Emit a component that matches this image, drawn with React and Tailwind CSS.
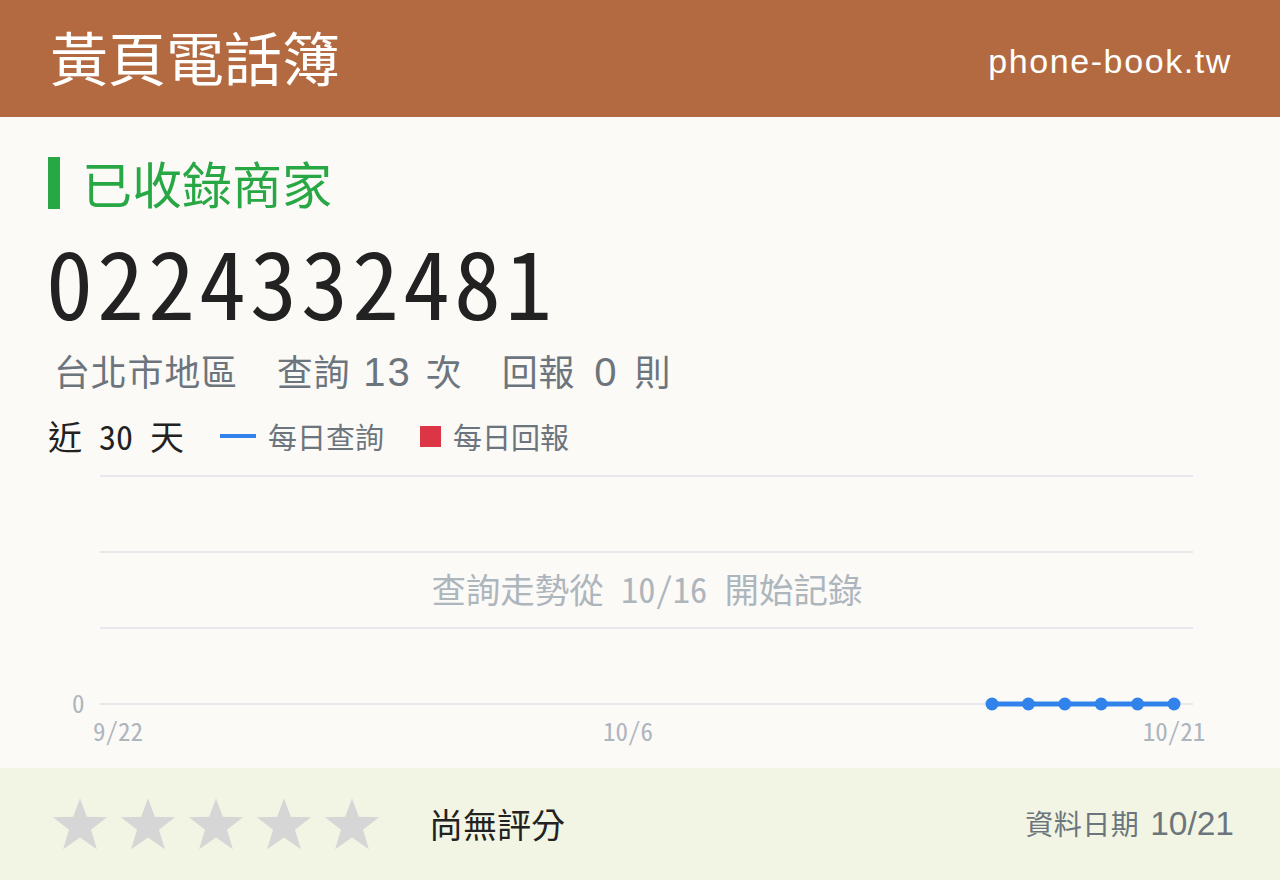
import React from "react";

const CJK = '"Noto Sans CJK TC", "Noto Sans CJK JP", sans-serif';
const MONO = '"Noto Sans Mono CJK TC", "Noto Sans CJK TC", monospace';
const ARIAL = '"Liberation Sans", Arial, "Noto Sans CJK TC", sans-serif';

function Star() {
  return (
    <svg width="58" height="54" viewBox="0 0 24 23" className="block">
      <polygon
        points="12,0.5 14.9,8.4 23.5,8.6 16.7,13.9 19.2,22.3 12,17.3 4.8,22.3 7.3,13.9 0.5,8.6 9.1,8.4"
        fill="#d6d6d6"
      />
    </svg>
  );
}

// 30-day query trend: day 0 = 9/22 ... day 29 = 10/21
function TrendChart() {
  const x0 = 118.4;
  const step = 36.4;
  const days = [24, 25, 26, 27, 28, 29];
  const pts = days.map((i) => x0 + i * step);
  const grid = [12, 88, 164, 240];
  return (
    <div className="relative mt-[11px] h-[290px] -mx-12">
      <svg width="1280" height="290" viewBox="0 0 1280 290" className="absolute inset-0">
        {grid.map((y) => (
          <line key={y} x1="100" x2="1193" y1={y} y2={y} stroke="#e6e8ec" strokeWidth="2" />
        ))}
        <polyline
          points={pts.map((x) => `${x},240`).join(" ")}
          fill="none"
          stroke="#3182eb"
          strokeWidth="5"
        />
        {pts.map((x) => (
          <circle key={x} cx={x} cy="240" r="6.5" fill="#3182eb" />
        ))}
      </svg>
      <div
        className="absolute left-0 right-0 top-[107px] text-center text-[#adb5bd] text-[34.5px] leading-none pl-[14px]"
        style={{ fontFamily: MONO }}
      >
        查詢走勢從 10/16 開始記錄
      </div>
      <div
        className="absolute left-[72px] top-[226px] text-[#adb5bd] text-[25px] leading-none"
        style={{ fontFamily: MONO }}
      >
        0
      </div>
      <div
        className="absolute inset-x-0 top-[254px] text-[#adb5bd] text-[25px] leading-none"
        style={{ fontFamily: MONO }}
      >
        <span className="absolute left-[118px] -translate-x-1/2">9/22</span>
        <span className="absolute left-[628px] -translate-x-1/2">10/6</span>
        <span className="absolute left-[1174px] -translate-x-1/2">10/21</span>
      </div>
    </div>
  );
}

export default function App() {
  return (
    <div className="w-[1280px] h-[880px] bg-[#fbfaf6] flex flex-col overflow-hidden">
      <header className="h-[117px] bg-[#b46a41] flex items-center justify-between pl-[50px] pr-[48px] shrink-0">
        <div className="text-white text-[58px] leading-none -mt-[6px]" style={{ fontFamily: CJK }}>
          黃頁電話簿
        </div>
        <div
          className="text-white text-[34px] leading-none tracking-[1.6px] mt-[5px]"
          style={{ fontFamily: ARIAL }}
        >
          phone-book.tw
        </div>
      </header>

      <main className="flex-1 px-12 pt-[40px]">
        <div className="flex items-center gap-[22px]">
          <div className="w-3 h-[52px] bg-[#28a745]" />
          <div className="text-[#28a745] text-[50px] leading-none -mt-[3px]" style={{ fontFamily: CJK }}>
            已收錄商家
          </div>
        </div>

        <div
          className="mt-[23px] -ml-[2px] text-[#222222] text-[94px] leading-none tracking-[4px]"
          style={{ fontFamily: MONO }}
        >
          0224332481
        </div>

        <div className="mt-[26px] flex items-baseline text-[#6c757d] leading-none">
          <span className="ml-[6px] text-[36px] tracking-[0.75px]" style={{ fontFamily: CJK }}>
            台北市地區
          </span>
          <span className="ml-[39px] text-[36px] tracking-[0.75px]" style={{ fontFamily: CJK }}>
            查詢
          </span>
          <span className="ml-[13px] text-[40px] tracking-[2px]" style={{ fontFamily: ARIAL }}>
            13
          </span>
          <span className="ml-[14px] text-[36px]" style={{ fontFamily: CJK }}>
            次
          </span>
          <span className="ml-[40px] text-[36px] tracking-[0.75px]" style={{ fontFamily: CJK }}>
            回報
          </span>
          <span className="ml-[19px] text-[40px]" style={{ fontFamily: ARIAL }}>
            0
          </span>
          <span className="ml-[18px] text-[36px]" style={{ fontFamily: CJK }}>
            則
          </span>
        </div>

        <div className="mt-[27px] flex items-center" style={{ fontFamily: MONO }}>
          <span className="text-[#222222] text-[34px] leading-none">近 30 天</span>
          <span className="ml-[36px] w-[36px] h-[4px] bg-[#3182eb]" />
          <span className="ml-[12px] text-[#6c757d] text-[29px] leading-none">每日查詢</span>
          <span className="ml-[36px] w-[21px] h-[21px] bg-[#dc3545]" />
          <span className="ml-[12px] text-[#6c757d] text-[29px] leading-none">每日回報</span>
        </div>

        <TrendChart />
      </main>

      <footer className="h-[112px] bg-[#f2f5e3] shrink-0 flex items-center pl-[51px] pr-[46px]">
        <div className="flex gap-[10px]">
          <Star />
          <Star />
          <Star />
          <Star />
          <Star />
        </div>
        <div className="ml-[48px] text-[#222222] text-[34px] leading-none" style={{ fontFamily: CJK }}>
          尚無評分
        </div>
        <div className="ml-auto text-[#6c757d] leading-none flex items-baseline">
          <span className="text-[28px] tracking-[0.5px]" style={{ fontFamily: CJK }}>
            資料日期
          </span>
          <span className="ml-[11px] text-[33.5px]" style={{ fontFamily: ARIAL }}>
            10/21
          </span>
        </div>
      </footer>
    </div>
  );
}
